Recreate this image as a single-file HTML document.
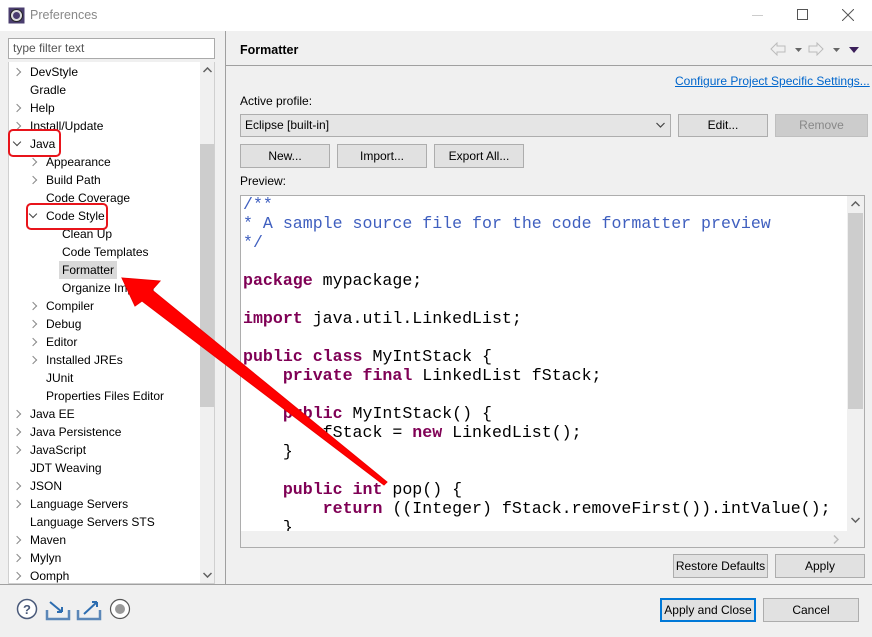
<!DOCTYPE html>
<html><head><meta charset="utf-8">
<style>
*{box-sizing:border-box;margin:0;padding:0}
body{width:872px;height:637px;overflow:hidden;background:#f0f0f0;font-family:"Liberation Sans",sans-serif;font-size:12px;color:#000;position:relative}
.abs{position:absolute}
.win{position:absolute;left:0;top:0;width:872px;height:637px;border:1px solid #aaa}
.title{position:absolute;left:0;top:0;width:872px;height:31px;background:#fff}
.tree{position:absolute;left:8px;top:62px;width:207px;height:522px;background:#fff;border:1px solid #d0d0d0;border-top:none;overflow:hidden}
.row{position:absolute;height:18px;line-height:18px;white-space:nowrap}
.chev{position:absolute;width:6px;height:6px;border-right:1.5px solid #888;border-bottom:1.5px solid #888;transform:rotate(-45deg)}
.chevd{position:absolute;width:6px;height:6px;border-right:1.5px solid #444;border-bottom:1.5px solid #444;transform:rotate(45deg)}
.btn{position:absolute;height:24px;background:#e1e1e1;border:1px solid #adadad;text-align:center;line-height:22px}
.code{position:absolute;left:240px;top:195px;width:625px;height:353px;background:#fff;border:1px solid #adadad;overflow:hidden}
pre{font-family:"Liberation Mono",monospace;font-size:16.6px;line-height:19px;position:absolute;left:2px;top:-1px;color:#000}
.k{color:#7f0055;font-weight:bold}
.c{color:#3f5fbf}
</style></head><body>
<div class="title">
  <svg class="abs" style="left:8px;top:7px" width="17" height="17" viewBox="0 0 17 17"><rect x="0.5" y="0.5" width="16" height="16" fill="#4a3d6e"/><circle cx="8.5" cy="8.5" r="6" fill="#ddd" stroke="#222"/><circle cx="8.5" cy="8.5" r="3.5" fill="#4a3d6e"/></svg>
  <div class="abs" style="left:30px;top:8px;color:#888;font-size:12.5px">Preferences</div>
  <div class="abs" style="left:752px;top:15px;width:11px;height:1px;background:#ccc"></div>
  <div class="abs" style="left:797px;top:9px;width:11px;height:11px;border:1px solid #555"></div>
  <svg class="abs" style="left:842px;top:9px" width="12" height="12"><path d="M0 0L12 12M12 0L0 12" stroke="#555" stroke-width="1"/></svg>
</div>
<div class="abs" style="left:8px;top:38px;width:207px;height:21px;background:#fff;border:1px solid #aaa;padding-left:4px;line-height:19px;color:#555">type filter text</div>
<div class="tree">
 <div class="chev" style="left:5px;top:7px"></div><div class="row" style="left:21px;top:1px">DevStyle</div>
 <div class="row" style="left:21px;top:19px">Gradle</div>
 <div class="chev" style="left:5px;top:43px"></div><div class="row" style="left:21px;top:37px">Help</div>
 <div class="chev" style="left:5px;top:61px"></div><div class="row" style="left:21px;top:55px">Install/Update</div>
 <div class="chevd" style="left:5px;top:77px"></div><div class="row" style="left:21px;top:73px">Java</div>
 <div class="chev" style="left:21px;top:97px"></div><div class="row" style="left:37px;top:91px">Appearance</div>
 <div class="chev" style="left:21px;top:115px"></div><div class="row" style="left:37px;top:109px">Build Path</div>
 <div class="row" style="left:37px;top:127px">Code Coverage</div>
 <div class="chevd" style="left:21px;top:149px"></div><div class="row" style="left:37px;top:145px">Code Style</div>
 <div class="row" style="left:53px;top:163px">Clean Up</div>
 <div class="row" style="left:53px;top:181px">Code Templates</div>
 <div class="row" style="left:50px;top:199px;background:#d9d9d9;padding:0 3px">Formatter</div>
 <div class="row" style="left:53px;top:217px">Organize Imports</div>
 <div class="chev" style="left:21px;top:241px"></div><div class="row" style="left:37px;top:235px">Compiler</div>
 <div class="chev" style="left:21px;top:259px"></div><div class="row" style="left:37px;top:253px">Debug</div>
 <div class="chev" style="left:21px;top:277px"></div><div class="row" style="left:37px;top:271px">Editor</div>
 <div class="chev" style="left:21px;top:295px"></div><div class="row" style="left:37px;top:289px">Installed JREs</div>
 <div class="row" style="left:37px;top:307px">JUnit</div>
 <div class="row" style="left:37px;top:325px">Properties Files Editor</div>
 <div class="chev" style="left:5px;top:349px"></div><div class="row" style="left:21px;top:343px">Java EE</div>
 <div class="chev" style="left:5px;top:367px"></div><div class="row" style="left:21px;top:361px">Java Persistence</div>
 <div class="chev" style="left:5px;top:385px"></div><div class="row" style="left:21px;top:379px">JavaScript</div>
 <div class="row" style="left:21px;top:397px">JDT Weaving</div>
 <div class="chev" style="left:5px;top:421px"></div><div class="row" style="left:21px;top:415px">JSON</div>
 <div class="chev" style="left:5px;top:439px"></div><div class="row" style="left:21px;top:433px">Language Servers</div>
 <div class="row" style="left:21px;top:451px">Language Servers STS</div>
 <div class="chev" style="left:5px;top:475px"></div><div class="row" style="left:21px;top:469px">Maven</div>
 <div class="chev" style="left:5px;top:493px"></div><div class="row" style="left:21px;top:487px">Mylyn</div>
 <div class="chev" style="left:5px;top:511px"></div><div class="row" style="left:21px;top:505px">Oomph</div>
 <div class="abs" style="left:191px;top:0;width:15px;height:522px;background:#f0f0f0"></div>
 <div class="abs" style="left:191px;top:82px;width:15px;height:263px;background:#cdcdcd"></div>
 <svg class="abs" style="left:194px;top:5px" width="9" height="6"><path d="M0.5 5L4.5 1L8.5 5" fill="none" stroke="#606060" stroke-width="1.5"/></svg>
 <svg class="abs" style="left:194px;top:510px" width="9" height="6"><path d="M0.5 1L4.5 5L8.5 1" fill="none" stroke="#606060" stroke-width="1.5"/></svg>
</div>
<div class="abs" style="left:225px;top:31px;width:1px;height:553px;background:#a0a0a0"></div>
<div class="abs" style="left:240px;top:43px;font-weight:bold;font-size:12.5px">Formatter</div>
<svg class="abs" style="left:770px;top:42px" width="92" height="14">
 <path d="M1 7L7 1V4H15V10H7V13Z" fill="none" stroke="#bbb"/><path d="M25 6h7l-3.5 4z" fill="#666"/>
 <path d="M53 7L47 1V4H39V10H47V13Z" fill="none" stroke="#bbb"/><path d="M63 6h7l-3.5 4z" fill="#666"/>
 <path d="M79 5h10l-5 6z" fill="#3b1f5a"/>
</svg>
<div class="abs" style="left:226px;top:65px;width:646px;height:1px;background:#a0a0a0"></div>
<div class="abs" style="left:675px;top:74px;color:#0066cc;text-decoration:underline">Configure Project Specific Settings...</div>
<div class="abs" style="left:240px;top:94px">Active profile:</div>
<div class="abs" style="left:240px;top:114px;width:431px;height:23px;background:#e5e5e5;border:1px solid #adadad;padding-left:4px;line-height:21px">Eclipse [built-in]</div>
<svg class="abs" style="left:656px;top:122px" width="9" height="6"><path d="M0.5 1L4.5 5L8.5 1" fill="none" stroke="#444" stroke-width="1.2"/></svg>
<div class="btn" style="left:678px;top:114px;width:90px;height:23px;line-height:21px">Edit...</div>
<div class="btn" style="left:775px;top:114px;width:93px;height:23px;line-height:21px;background:#ccc;border-color:#bfbfbf;color:#888">Remove</div>
<div class="btn" style="left:240px;top:144px;width:90px">New...</div>
<div class="btn" style="left:337px;top:144px;width:90px">Import...</div>
<div class="btn" style="left:434px;top:144px;width:90px">Export All...</div>
<div class="abs" style="left:240px;top:174px">Preview:</div>
<div class="code">
<pre><span class="c">/**
* A sample source file for the code formatter preview
*/</span>

<span class="k">package</span> mypackage;

<span class="k">import</span> java.util.LinkedList;

<span class="k">public class</span> MyIntStack {
    <span class="k">private final</span> LinkedList fStack;

    <span class="k">public</span> MyIntStack() {
        fStack = <span class="k">new</span> LinkedList();
    }

    <span class="k">public int</span> pop() {
        <span class="k">return</span> ((Integer) fStack.removeFirst()).intValue();
    }</pre>
 <div class="abs" style="left:606px;top:0;width:17px;height:335px;background:#f0f0f0"></div>
 <div class="abs" style="left:607px;top:17px;width:15px;height:196px;background:#cdcdcd"></div>
 <svg class="abs" style="left:610px;top:5px" width="9" height="6"><path d="M0.5 5L4.5 1L8.5 5" fill="none" stroke="#606060" stroke-width="1.5"/></svg>
 <svg class="abs" style="left:610px;top:321px" width="9" height="6"><path d="M0.5 1L4.5 5L8.5 1" fill="none" stroke="#606060" stroke-width="1.5"/></svg>
 <div class="abs" style="left:0;top:335px;width:623px;height:17px;background:#f0f0f0"></div>
 <svg class="abs" style="left:592px;top:339px" width="6" height="9"><path d="M1 0.5L5 4.5L1 8.5" fill="none" stroke="#bbb" stroke-width="1.5"/></svg>
</div>
<div class="btn" style="left:673px;top:554px;width:95px">Restore Defaults</div>
<div class="btn" style="left:775px;top:554px;width:90px">Apply</div>
<div class="abs" style="left:0;top:584px;width:872px;height:1px;background:#a0a0a0"></div>
<svg class="abs" style="left:16px;top:598px" width="120" height="24">
 <circle cx="11" cy="11" r="9.5" fill="#fff" stroke="#4a5a7a" stroke-width="1.5"/>
 <text x="11" y="16" text-anchor="middle" font-family="Liberation Sans" font-weight="bold" font-size="13" fill="#4a5a7a">?</text>
 <path d="M31 12v9h22v-9" fill="none" stroke="#5b87b8" stroke-width="2.5"/><path d="M34 4l12 10M46 14h-5M46 14v-5" stroke="#2d6db0" stroke-width="2" fill="none"/>
 <path d="M62 12v9h22v-9" fill="none" stroke="#5b87b8" stroke-width="2.5"/><path d="M68 16l13-12M81 4h-5M81 4v5" stroke="#2d6db0" stroke-width="2" fill="none"/>
 <circle cx="104" cy="11" r="9.5" fill="#fff" stroke="#555" stroke-width="1.2"/><circle cx="104" cy="11" r="5" fill="#999"/>
</svg>
<div class="btn" style="left:660px;top:598px;width:96px;border:2px solid #0078d7;line-height:20px">Apply and Close</div>
<div class="btn" style="left:763px;top:598px;width:96px">Cancel</div>
<div class="abs" style="left:8px;top:129px;width:53px;height:28px;border:2px solid #e8141b;border-radius:5px"></div>
<div class="abs" style="left:26px;top:203px;width:82px;height:27px;border:2px solid #e8141b;border-radius:5px"></div>
<svg class="abs" style="left:0;top:0" width="872" height="637">
 <polygon points="122,278 160,281 152,290 387,482 384,485 142,301 135,306" fill="#ff0000" stroke="#e00" stroke-width="1"/>
</svg>
</body></html>
